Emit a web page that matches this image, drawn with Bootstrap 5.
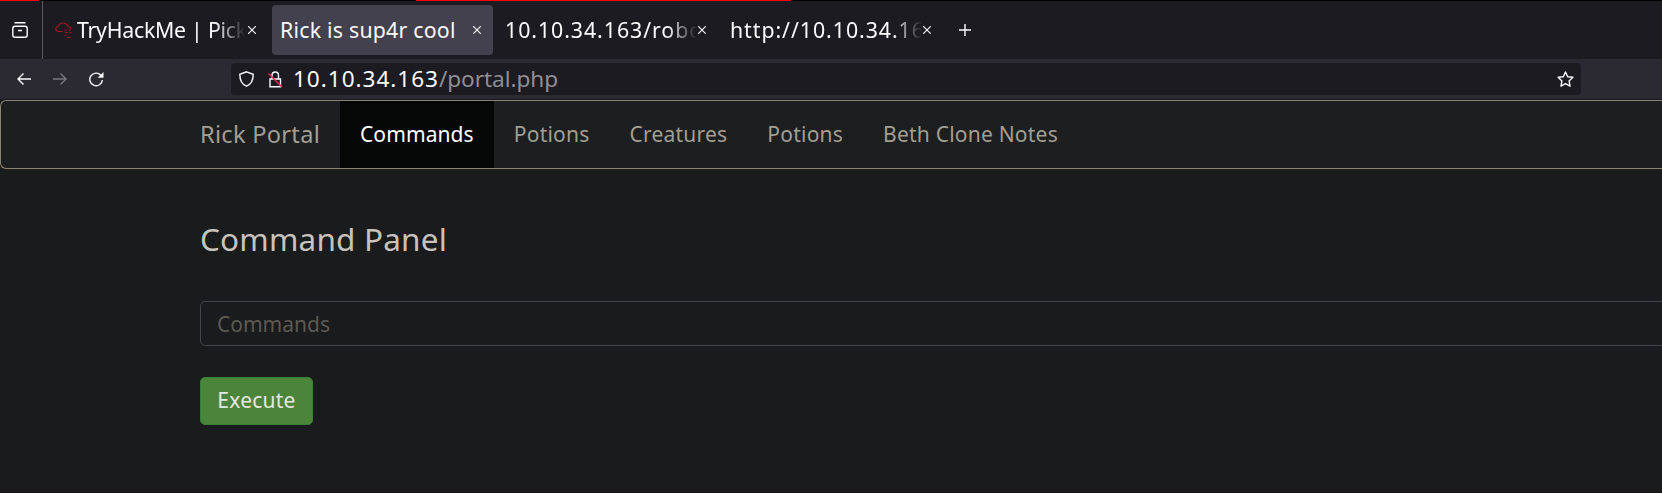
<!DOCTYPE html>
<html lang="en"><head><meta charset="utf-8"><title>Rick is sup4r cool</title>
<link href="https://cdn.jsdelivr.net/npm/bootstrap@5.3.0/dist/css/bootstrap.min.css" rel="stylesheet">
<style>
html,body{height:493px;overflow:hidden}
body{background:#1a1b1d;font-family:"Noto Sans","Open Sans",sans-serif;color:#c8c3bb;border-bottom:1px solid #1b1118}
svg{flex:none;display:block;fill:none;stroke:#fbfbfe;stroke-width:1.4}
.tab-text{display:block;white-space:nowrap;line-height:30px}
.strip{height:1px;background:linear-gradient(90deg,#f00 39px,#000 39px 416px,#f00 416px 791px,#000 791px)}
.tabs{height:58px;background:#1c1b22;color:#fbfbfe}
.view{width:43px;height:58px;border-right:1px solid #5b5a61;padding-left:12px}
.tab-item{height:50px;border-radius:4px;font-size:21.3px}
.tab-item svg{stroke-width:1.1}
.tab-item.active{background:#42414d}
.fade-end{overflow:hidden;-webkit-mask-image:linear-gradient(90deg,#000 calc(100% - 30px),transparent)}
.digits{letter-spacing:.95px}
.tools{height:40px;background:#2b2a33}
.url{width:1350px;height:32px;background:#1c1b22;border-radius:4px;margin-left:127px;font-size:22.6px;color:#fbfbfe}
.url-path{color:#8f8e95;letter-spacing:-.05px}
.site{height:69px;margin-top:1px;border:1px solid #8c8271;border-right:0;border-radius:6px 0 0 6px;background:#1c1e1f}
.site .nav-link{height:67px;padding:0 20px;color:#a39e93;font-size:21px;letter-spacing:.22px}
.site .nav-link.active{background:#050706;color:#fff;letter-spacing:.1px}
.site .navbar-brand{font-size:23.6px;color:#a39e93;width:140px;margin:0 0 0 199px;padding:0;letter-spacing:.28px}
.panel{padding-left:200px}
.heading{font-size:31.5px;line-height:40px;margin:0;padding-top:50px;font-weight:400;letter-spacing:.18px}
.cmd{width:1500px;height:45px;margin-top:42px;background:#1a1b1d!important;border:1px solid #414548;border-radius:5px;font-size:21px;padding:0 16px}
.cmd::placeholder{color:#5c5953;opacity:1}
.run{width:113px;height:48px;margin-top:31px;background:#4b853a;border:1px solid #368038;border-radius:5px;color:#e8e6e3;font-size:21px;padding:0;letter-spacing:.25px}
</style></head><body>
<div class="strip"></div>
<div class="tabs d-flex align-items-center">
 <div class="view d-flex align-items-center"><svg width="16" height="16" viewBox="0 0 16 16"><path d="M2.500 .8H13.500M3 4.200H13Q15.200 4.200 15.200 6.500V13Q15.200 15.200 13 15.200H3Q.8 15.200 .8 13V6.500Q.8 4.200 3 4.200ZM6 8.500h4"/></svg></div>
 <div class="tab-item d-flex align-items-center" style="width:229px;padding-left:12px">
  <svg width="17" height="17" viewBox="0 0 17 17" style="stroke:#a31621"><path d="M7.500 9.500H3Q.7 9 .7 7 .7 4.800 3.500 4.500 4 1 8 1 11.500 1 12.500 4 15.700 4.500 15.700 7.500M9.500 8.200h2m2 0h2M10 10.500h3m1 0h2.500M9.500 13h2M12 15.500h4"/></svg>
  <span class="tab-text fade-end" style="width:168px;margin-left:5px;letter-spacing:-.25px">TryHackMe | Pick</span><svg width="8" height="8" viewBox="0 0 8 8" style="margin-left:3px"><path d="M0 0L8 8M8 0L0 8"/></svg>
 </div>
 <div class="tab-item active d-flex align-items-center" style="width:221px;padding-left:8px"><span class="tab-text" style="width:193px;letter-spacing:.23px">Rick is sup4r cool</span><svg width="8" height="8" viewBox="0 0 8 8"><path d="M0 0L8 8M8 0L0 8"/></svg></div>
 <div class="tab-item d-flex align-items-center" style="width:225px;padding-left:12px"><span class="tab-text fade-end digits" style="width:192px">10.10.34.163/robo</span><svg width="8" height="8" viewBox="0 0 8 8" style="margin-left:1px"><path d="M0 0L8 8M8 0L0 8"/></svg></div>
 <div class="tab-item d-flex align-items-center" style="width:241px;padding-left:12px"><span class="tab-text fade-end digits" style="width:192px">http://10.10.34.16</span><svg width="8" height="8" viewBox="0 0 8 8" style="margin-left:1px"><path d="M0 0L8 8M8 0L0 8"/></svg></div>
 <svg width="12" height="12" viewBox="0 0 12 12"><path d="M6 0V12M0 6H12"/></svg>
</div>
<div class="tools d-flex align-items-center">
 <svg width="14" height="12" viewBox="0 0 14 12" style="margin-left:17px"><path d="M14 6H1M6.500 .5L1 6l5.500 5.500"/></svg>
 <svg width="14" height="12" viewBox="0 0 14 12" style="margin-left:22px;stroke:#78777d"><path d="M0 6H13M7.500 .5L13 6l-5.500 5.500"/></svg>
 <svg width="15" height="15" viewBox="0 0 15 15" style="margin-left:22px"><path d="M13.400 8A6.300 6.300 0 1 1 11.800 3.200"/><path d="M14.500 0V5.800H8.700Z" fill="#fbfbfe" stroke="none"/></svg>
 <div class="url d-flex align-items-center">
  <svg width="15" height="16" viewBox="0 0 15 16" style="margin-left:8px"><path d="M7.500 .8L14.200 3.300C14.200 9 12 13.500 7.500 15.200 3 13.500 .8 9 .8 3.300Z"/></svg>
  <svg width="15" height="17" viewBox="0 0 15 17" style="margin-left:14px"><path d="M2 8H12.500V15.700H2ZM4 8V4.500Q4 1 7.300 1 10.500 1 10.500 4.500V8"/><path d="M.5 2.500L14 16" stroke="#e22850"/></svg>
  <span class="tab-text" style="margin-left:10px"><span class="digits">10.10.34.163</span><span class="url-path">/portal.php</span></span>
  <svg width="17" height="17" viewBox="0 0 17 17" class="ms-auto" style="margin-right:7px"><path stroke-linejoin="round" d="M8.500 1L10.700 5.700 15.900 6.300 12.100 9.900 13 15.200 8.500 12.700 4 15.200 4.900 9.900 1.100 6.300 6.300 5.700Z"/></svg>
 </div>
</div>
<nav class="site navbar p-0 flex-nowrap justify-content-start">
 <a class="navbar-brand" href="#">Rick Portal</a>
 <div class="nav flex-nowrap">
  <a class="nav-link active d-flex align-items-center" href="#">Commands</a><a class="nav-link d-flex align-items-center" href="#">Potions</a><a class="nav-link d-flex align-items-center" href="#">Creatures</a><a class="nav-link d-flex align-items-center" href="#">Potions</a><a class="nav-link d-flex align-items-center" href="#">Beth Clone Notes</a>
 </div>
</nav>
<main class="panel"><h1 class="heading">Command Panel</h1>
<input class="cmd form-control" placeholder="Commands"><button class="run btn">Execute</button></main>
<script src="https://cdn.jsdelivr.net/npm/bootstrap@5.3.0/dist/js/bootstrap.bundle.min.js"></script>
</body></html>
